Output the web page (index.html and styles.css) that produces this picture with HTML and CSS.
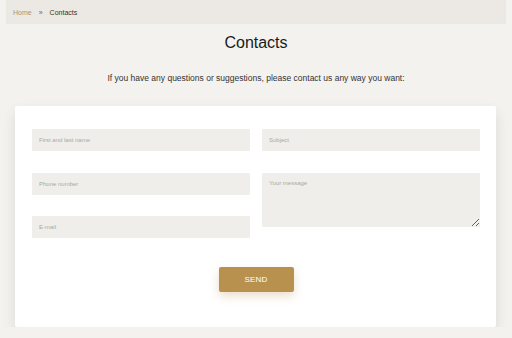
FILE: index.html
```html
<!DOCTYPE html>
<html lang="en">
<head>
    <meta charset="UTF-8">
    <meta name="viewport" content="width=device-width, initial-scale=1.0">
    <title>Contacts</title>
    <link rel="stylesheet" href="styles.css">
</head>
<body>
    <div class="breadcrumbs">
        <a class="crumb-link" href="#">Home</a>
        <span class="crumb-sep">&raquo;</span>
        <span class="crumb-current">Contacts</span>
    </div>

    <h1 class="page-title">Contacts</h1>
    <p class="page-lead">If you have any questions or suggestions, please contact us any way you want:</p>

    <div class="card">
        <form class="contact-form">
            <div class="form-cols">
                <div class="form-col">
                    <input class="field" type="text" placeholder="First and last name">
                    <input class="field" type="text" placeholder="Phone number">
                    <input class="field" type="text" placeholder="E-mail">
                </div>
                <div class="form-col">
                    <input class="field" type="text" placeholder="Subject">
                    <textarea class="field field-area" placeholder="Your message"></textarea>
                </div>
            </div>
            <div class="form-actions">
                <button class="btn-send" type="button">SEND</button>
            </div>
        </form>
    </div>
</body>
</html>
```

FILE: styles.css
```css
body {
    margin: 0;
    background: #f3f2ef;
    color: #222222;
    font-family: 'Liberation Sans', Arial, sans-serif;
    overflow: hidden;
}

.breadcrumbs {
    margin: 0 6px;
    height: 24px;
    padding: 0 7px;
    background: #ece9e4;
    display: flex;
    align-items: center;
    gap: 7px;
    font-size: 7px;
}

.crumb-link {
    color: #a6947c;
    text-decoration: none;
}

.crumb-sep {
    color: #666666;
    font-size: 7px;
}

.crumb-current {
    color: #333333;
}

.page-title {
    margin: 9px 0 0;
    text-align: center;
    font-size: 16px;
    font-weight: normal;
    color: #1a1a1a;
    line-height: 20px;
}

.page-lead {
    margin: 19px 0 0;
    text-align: center;
    font-size: 8.5px;
    color: #333333;
    line-height: 12px;
}

.card {
    margin: 22px 16px 0 15px;
    background: #ffffff;
    box-shadow: 0 6px 14px rgba(0, 0, 0, 0.1);
    border-radius: 2px;
    padding: 23px 16px 35px 17px;
}

.form-cols {
    display: flex;
    gap: 12px;
}

.form-col {
    flex: 1;
    display: flex;
    flex-direction: column;
    gap: 21.5px;
}

.field {
    box-sizing: border-box;
    width: 100%;
    height: 22px;
    margin: 0;
    border: none;
    border-radius: 1px;
    background: #efeeea;
    padding: 0 7px;
    font-family: 'Liberation Sans', Arial, sans-serif;
    font-size: 6px;
    color: #333333;
    outline: none;
}

.field::placeholder {
    color: #a8aaa4;
}

.field-area {
    height: 54px;
    padding: 7px;
    resize: vertical;
    display: block;
}

.form-actions {
    display: flex;
    justify-content: center;
    margin-top: 28.5px;
}

.btn-send {
    width: 75px;
    height: 25px;
    border: none;
    border-radius: 2px;
    background: #b8914e;
    color: #ffffff;
    font-family: 'Liberation Sans', Arial, sans-serif;
    font-size: 8px;
    letter-spacing: 0.2px;
    box-shadow: 0 4px 10px rgba(184, 145, 78, 0.3);
    cursor: pointer;
}
```
